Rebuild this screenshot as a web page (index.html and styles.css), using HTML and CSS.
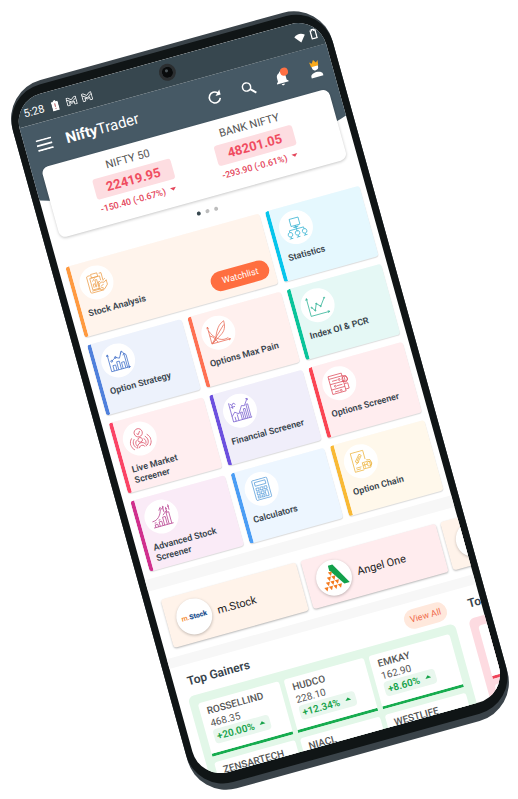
FILE: index.html
```html
<!DOCTYPE html>
<html lang="en">
<head>
<meta charset="utf-8">
<meta name="viewport" content="width=device-width, initial-scale=1">
<title>NiftyTrader</title>
<link rel="stylesheet" href="styles.css">
</head>
<body>
<main class="phone">
<div class="bezel">
<div class="screen">
  <span class="camera"></span>
  <div class="status">
    <span class="time">5:28</span>
    <svg class="s-batt" viewBox="0 0 8 12"><path d="M2.6 0h2.8v1.4H8V12H0V1.4h2.6z" fill="#fff"/><path d="M4 3.5v4M4 8.8v1.3" stroke="#b9666a" stroke-width="1.2"/></svg>
    <svg class="s-mail" viewBox="0 0 12 10"><path d="M.6 9.400V.8h1.800L6 3.600 9.600.8h1.800v8.600H8.600V5.800L6 7.800 3.400 5.800v3.600zM.6 2.600L6 6.200l5.400-3.600" fill="none" stroke="#fff" stroke-width=".9"/></svg>
    <svg class="s-mail" viewBox="0 0 12 10"><path d="M.6 9.400V.8h1.800L6 3.600 9.600.8h1.800v8.600H8.600V5.800L6 7.800 3.400 5.800v3.600zM.6 2.600L6 6.200l5.400-3.600" fill="none" stroke="#fff" stroke-width=".9"/></svg>
    <svg class="s-wifi" viewBox="0 0 12 10"><path d="M0 2.6Q6-2 12 2.6L6 10z" fill="#fff"/></svg>
    <svg class="s-cell" viewBox="0 0 7 11"><path d="M1 2h1.5V.8h2V2H6v8H1z" fill="none" stroke="#fff" stroke-width="1.3"/></svg>
  </div>
  <header class="top">
    <button class="ic" aria-label="Menu"><svg width="16" height="12" viewBox="0 0 16 12"><path d="M0 1h16M0 6h16M0 11h16" stroke="#fff" stroke-width="1.7"/></svg></button>
    <h1 class="brand"><b>Nifty</b>Trader</h1>
    <nav class="tools">
      <button class="ic" aria-label="Refresh"><svg width="15" height="15" viewBox="0 0 15 15"><path d="M12.6 9.3a5.5 5.5 0 1 1-1.2-5.7l1.3 1.3" fill="none" stroke="#fff" stroke-width="1.6"/><path d="M13.8.9v5.3H8.5z" fill="#fff"/></svg></button>
      <button class="ic" aria-label="Search"><svg width="15" height="15" viewBox="0 0 15 15"><circle cx="5.8" cy="5.8" r="4.1" fill="none" stroke="#fff" stroke-width="1.5"/><path d="M8.8 8.8l5 5" stroke="#fff" stroke-width="1.9"/></svg></button>
      <button class="ic bell" aria-label="Notifications"><svg width="14" height="16" viewBox="0 0 14 16"><path d="M1 12.6v-.9l1.5-1.5V6.6c0-2.4 1.4-4.2 3.4-4.7C6 .6 8 .6 8.100 1.900c2 .5 3.400 2.300 3.400 4.700v3.600l1.500 1.500v.9zM5.500 13.500h3c0 2-3 2-3 0z" fill="#fff"/></svg><span class="badge"></span></button>
      <button class="ic" aria-label="Profile"><svg width="14" height="20" viewBox="0 0 14 20"><path d="M4 7.500a3.200 3.200 0 0 0 6 0V6H4z" fill="#fff"/><circle cx="7" cy="8" r="3.200" fill="#fff"/><path d="M1 18v-1.600c0-2.500 4-3.400 6-3.400s6 .9 6 3.400V18z" fill="#fff"/><path d="M3.300 7L2.600 1.800l2.200 2L7 .5l2.200 3.300 2.200-2L10.700 7z" fill="#f9a91b"/></svg></button>
    </nav>
  </header>
  <section class="indices">
    <article class="index">
      <h2>NIFTY 50</h2><strong>22419.95</strong>
      <p>-150.40 (-0.67%) <i class="down"></i></p>
    </article>
    <article class="index">
      <h2>BANK NIFTY</h2><strong>48201.05</strong>
      <p>-293.90 (-0.61%) <i class="down"></i></p>
    </article>
  </section>
  <div class="dots"><i class="on"></i><i></i><i></i></div>

  <section class="grid">
    <article class="tile wide orange">
      <span class="disc"><svg viewBox="0 0 24 24"><path d="M7 3H4.500A1.500 1.500 0 0 0 3 4.500v16A1.500 1.500 0 0 0 4.500 22H18M17 3h2.500"/><path d="M19.500 3v9M6 6h11v5M6 6v13h8M8 2h7v4H8zM5 20h10M8 17v-4h2v4M11 17V9h2v8M14 17v-5h2M8 10l3-3"/><path d="M14 15l3-2 3 1 3-2v5l-4 4h-4l-2-2zM16 17l3-1M18 20l-3-2M20 11l2-1"/></svg></span>
      <a href="#">Stock Analysis</a><button class="watch">Watchlist</button>
    </article>
    <article class="tile cyan">
      <span class="disc"><svg viewBox="0 0 24 24"><path d="M7 2h10v8H7zM12 10v5M10 12h4M4 16v-2h16v2M12 15v2M9 11.500h6"/><circle cx="4" cy="18.500" r="2.500"/><circle cx="12" cy="18.500" r="2.500"/><circle cx="20" cy="18.500" r="2.500"/><path d="M2 23h4M10 23h4M18 23h4M4 21v2M12 21v2M20 21v2"/></svg></span>
      <a href="#">Statistics</a>
    </article>
    <article class="tile blue">
      <span class="disc"><svg viewBox="0 0 24 24"><path d="M2 3v19h21M.8 5L2 3l1.200 2M21 20.800l2 1.200-2 1.200M5 22v-6h3v6M10 22v-9h3v9M15 22v-7h3v7M20 22V6l-1.500 2M20 6l-2-3-2 3M20 6l2 2v14M5 11l5-3 4 2 4-7"/><circle cx="5" cy="11" r="1"/><circle cx="10" cy="8" r="1"/></svg></span>
      <a href="#">Option Strategy</a>
    </article>
    <article class="tile coral">
      <span class="disc"><svg viewBox="0 0 24 24"><path d="M2 3v19h21M1 5l1-2 1 2M21 21l2 1-2 1M2 22L20 5M2 22C7 21 8 15 11 10S16 3 21 1c0 7-2 11-7 14S6 20 2 22M2 7c2 5 4 9 9 12 4 2 6 2 10 1M2 13c4 2 5 5 7 9"/></svg></span>
      <a href="#">Options Max Pain</a>
    </article>
    <article class="tile green">
      <span class="disc"><svg viewBox="0 0 24 24"><path d="M2 2v20h21M.8 4L2 2l1.200 2M21 20.800l2 1.200-2 1.200M5 13l3 4 3-7 4 4 6-8"/><circle cx="5" cy="13" r=".6"/><circle cx="8" cy="17" r=".6"/><circle cx="11" cy="10" r=".6"/><circle cx="15" cy="14" r=".6"/><circle cx="21" cy="6" r=".6"/></svg></span>
      <a href="#">Index OI &amp; PCR</a>
    </article>
    <article class="tile rose">
      <span class="disc"><svg viewBox="0 0 24 24"><circle cx="12" cy="5.500" r="4.500"/><circle cx="12" cy="13.500" r="2.500"/><path d="M10 6l1.500 1.500L14 4M7 22c0-7 10-7 10 0M9 22c0-3 6-3 6 0M6 11c-3 3-3 7 0 10M3.500 9.500c-4 4-4 9 0 13M8 13c-2 2-2 4-1 6M18 11c3 3 3 7 0 10M20.500 9.500c4 4 4 9 0 13M16 13c2 2 2 4 1 6"/></svg></span>
      <a href="#">Live Market Screener</a>
    </article>
    <article class="tile violet">
      <span class="disc"><svg viewBox="0 0 24 24"><path d="M2 1v21h21M2 16l4-4 4 3 5-8 3 1 5-7M21 1h2v2M5 22v-5M8 22v-7M12 22v-8h2v8M16 22V11h2v11M20 22V7h2v15M3 2l2 2 2-2 2 2M3 6h5M5 4v4"/></svg></span>
      <a href="#">Financial Screener</a>
    </article>
    <article class="tile red">
      <span class="disc"><svg viewBox="0 0 24 24"><path d="M2 2h15v20H2zM2 5h15M2 11h15M2 17h15M5 8h6M9 14h6M5 20h5M17 5l4 1 1 4-3 3M17 14h4v6h-4M19 7v4h-4"/><circle cx="13" cy="8" r="1"/><circle cx="7" cy="14" r="1"/><circle cx="19" cy="9" r="3"/><circle cx="12" cy="20" r="1"/></svg></span>
      <a href="#">Options Screener</a>
    </article>
    <article class="tile magenta">
      <span class="disc"><svg viewBox="0 0 24 24"><path d="M1 22h22M3 22v-3h3v3M8 22v-5h3v5M13 22v-9h3v9M18 22V9h3v13M1 15c6 0 10-4 12-11M11 5l2-3 2 3M16 1v7M19 3v6M22 1v6M15 4l2-2M18 5h2M21 3h2M3 17h2M8 15h2M14 11l5-4"/></svg></span>
      <a href="#">Advanced Stock Screener</a>
    </article>
    <article class="tile sky">
      <span class="disc"><svg viewBox="0 0 24 24"><rect x="3.500" y="1" width="17" height="22" rx="1"/><path d="M6 3.500h12v4H6zM6 10h3v3H6zM10.500 10h3v3h-3zM15 10h3v3h-3zM6 14.500h3v3H6zM10.500 14.500h3v3h-3zM15 14.500h3V21h-3zM6 19h3v2H6zM10.500 19h3v2h-3z"/></svg></span>
      <a href="#">Calculators</a>
    </article>
    <article class="tile amber">
      <span class="disc"><svg viewBox="0 0 24 24"><path d="M17 11V1H3v21h10M5 18h6M5 20h5"/><path d="M6 11l6-7 2 2-6 7zM8 11l4-5M6 14l4-2M13 14h6l2 1v6h-8zM13 17h6M18 12l4 1 1 4-2 3M15 15v5"/><circle cx="20" cy="17" r="2.500"/></svg></span>
      <a href="#">Option Chain</a>
    </article>
  </section>

  <section class="brokers">
    <a class="broker peach" href="#"><span class="logo"><span class="mstock"><b>m.</b>Stock</span></span>m.Stock</a>
    <a class="broker blush" href="#"><span class="logo"><svg width="30" height="28" viewBox="0 0 32 30"><path d="M13 1h5l13 23h-6L13 6z" fill="#12a04b"/><g fill="#f47b20"><path d="M11 8h4.600l-2.300 4.500zM8.500 13h4.600l-2.300 4.500zM13.500 13h4.600l-2.300 4.500zM6 18h4.600l-2.300 4.500zM11 18h4.600l-2.300 4.500zM16 18h4.600l-2.300 4.500zM3 23h4.600l-2.300 4.500zM8 23h4.600l-2.300 4.500zM13 23h4.600l-2.300 4.500zM18 23h4.600l-2.300 4.500z"/></g></svg></span>Angel One</a>
    <a class="broker peach" href="#" aria-label="Next broker"><span class="logo"></span></a>
  </section>

  <section class="movers">
    <section class="mover">
      <header class="mhead"><h2>Top Gainers</h2><a class="all" href="#">View All</a></header>
      <div class="panel up">
        <article class="quote"><h3>ROSSELLIND</h3><p>468.35</p><span class="chg">+20.00% <i class="rise"></i></span></article>
        <article class="quote"><h3>HUDCO</h3><p>228.10</p><span class="chg">+12.34% <i class="rise"></i></span></article>
        <article class="quote"><h3>EMKAY</h3><p>162.90</p><span class="chg">+8.60% <i class="rise"></i></span></article>
        <article class="quote"><h3>ZENSARTECH</h3></article>
        <article class="quote"><h3>NIACL</h3></article>
        <article class="quote"><h3>WESTLIFE</h3></article>
      </div>
    </section>
    <section class="mover">
      <header class="mhead"><h2>Top Losers</h2></header>
      <div class="panel loss">
        <article class="quote"></article><article class="quote"></article><article class="quote"></article>
        <article class="quote"></article><article class="quote"></article><article class="quote"></article>
      </div>
    </section>
  </section>
</div>
</div>
</main>
</body>
</html>
```
FILE: styles.css
```css
* { box-sizing: border-box; margin: 0; padding: 0; }
body {
  min-height: 100vh;
  display: flex;
  align-items: center;
  justify-content: center;
  padding: 2px 0 0 2px;
  overflow: hidden;
  background: #fff;
  color: #37434c;
  font-family: Roboto, "Open Sans", sans-serif;
}
a { color: inherit; text-decoration: none; }
button { border: 0; background: none; font: inherit; color: inherit; }
svg { display: block; }

/* device */
.phone {
  flex: none;
  width: 100%;
  max-width: 332px;
  padding: 4px 0 7px;
  border-radius: 40px;
  background: #3a4349;
  transform: rotate(-15.5deg);
}
.bezel { padding: 9px 7px 11px; border-radius: 38px; background: #101516; }
.screen {
  position: relative;
  aspect-ratio: 318 / 704;
  overflow: hidden;
  border-radius: 29px;
  background: #fff;
}
.camera {
  position: absolute;
  z-index: 3;
  top: 5px;
  left: 50%;
  width: 17px;
  height: 17px;
  margin-left: -10px;
  border: 3px solid #2b2e30;
  border-radius: 50%;
  background: radial-gradient(circle at 45% 35%, #4b5357 0 1px, #090b0c 2px);
}

/* status and app bar */
.status {
  position: relative;
  z-index: 2;
  display: flex;
  align-items: center;
  gap: 5px;
  height: 28px;
  padding: 3px 6px 0 8px;
  background: #37474f;
  color: #fff;
}
.time { font-size: 11px; }
.s-batt { width: 7px; height: 11px; margin: 0 3px; }
.s-mail { width: 11px; height: 9px; }
.s-wifi { width: 11px; height: 10px; margin-left: auto; }
.s-cell { width: 7px; height: 11px; }
.top {
  position: relative;
  z-index: 0;
  display: flex;
  align-items: center;
  height: 44px;
  padding: 0 9px 0 12px;
  color: #fff;
}
.top::before {
  content: "";
  position: absolute;
  z-index: -1;
  inset: 0 -40px -50px;
  border-radius: 0 0 50% 50% / 0 0 48px 48px;
  background: #465965;
}
.brand { margin-left: 14px; font-size: 15px; font-weight: 400; }
.tools { display: flex; gap: 19px; margin-left: auto; }
.ic { position: relative; display: grid; place-items: center; min-width: 16px; height: 20px; }
.badge {
  position: absolute;
  top: 0;
  right: 0;
  width: 8px;
  height: 8px;
  border-radius: 50%;
  background: #ff7043;
}

/* indices */
.indices {
  position: relative;
  z-index: 1;
  display: flex;
  height: 73px;
  margin: 0 10px;
  padding: 8px 23px 0;
  border-radius: 7px;
  background: #fff;
  box-shadow: 0 1px 3px rgba(0, 0, 0, .22);
}
.index { flex: 1; text-align: center; }
.index h2 { font-size: 11px; line-height: 14px; font-weight: 400; color: #555; }
.index strong {
  display: block;
  width: 81px;
  margin: 3px auto 0;
  border-radius: 3px;
  background: #fddde1;
  color: #f04c60;
  font-size: 13px;
  line-height: 21px;
}
.index p {
  margin-top: 4px;
  color: #e4455a;
  font-size: 9px;
  line-height: 12px;
  font-weight: 500;
  white-space: nowrap;
}
.down, .rise { display: inline-block; border: 3px solid transparent; margin-left: 3px; }
.down { border-top-color: #e4455a; border-bottom: 0; vertical-align: 2px; }
.rise { border-bottom-color: #17a34a; border-top: 0; vertical-align: 3px; }
.dots { display: flex; justify-content: center; gap: 5px; padding: 11px 0 14px; }
.dots i { width: 4px; height: 4px; border-radius: 50%; background: #bdbdbd; }
.dots .on { background: #37474f; }

/* feature tiles */
.grid {
  display: grid;
  grid-template-columns: repeat(3, 1fr);
  gap: 8px 6px;
  padding: 0 6px 7px 7px;
}
.tile {
  position: relative;
  height: 73px;
  padding: 6px 8px 0 5px;
  border-left: 4px solid var(--c);
  border-radius: 3px;
  background: var(--bg);
  box-shadow: 0 1px 1px rgba(0, 0, 0, .14);
}
.wide { grid-column: span 2; }
.tile a { display: block; margin-top: 6px; padding-left: 1px; font-size: 9px; line-height: 11px; font-weight: 600; }
.disc {
  display: grid;
  place-items: center;
  width: 34px;
  height: 34px;
  border-radius: 50%;
  background: #fff;
}
.disc svg { width: 22px; height: 22px; fill: none; stroke: var(--i, var(--c)); stroke-width: .8; }
.watch {
  position: absolute;
  right: 5px;
  bottom: 8px;
  width: 60px;
  height: 20px;
  border-radius: 10px;
  background: #ff6e40;
  color: #fff;
  font-size: 9px;
}
.orange { --c: #ff9a40; --i: #eea04f; --bg: #fff4ec; }
.cyan { --c: #06c5ec; --i: #37b3d2; --bg: #e5f8fe; }
.blue { --c: #4f80dc; --i: #4372c9; --bg: #edf2fc; }
.coral { --c: #ff7052; --i: #ea705d; --bg: #fff0ee; }
.green { --c: #09c49a; --i: #2fb396; --bg: #e5f8f5; }
.rose { --c: #fb4465; --i: #dc5068; --bg: #ffeef0; }
.violet { --c: #6c50df; --i: #7b62cf; --bg: #f0eefa; }
.red { --c: #fb4553; --i: #df5361; --bg: #ffedef; }
.magenta { --c: #d02f8e; --i: #b84391; --bg: #faebf7; }
.sky { --c: #4a9df5; --i: #5b9fdb; --bg: #edf6ff; }
.amber { --c: #f9b934; --i: #eeb745; --bg: #fff8eb; }

/* brokers */
.brokers {
  display: flex;
  gap: 5px;
  padding: 11px 10px 9px;
  border-top: 12px solid #f7f7f7;
  border-bottom: 10px solid #f7f7f7;
}
.broker {
  flex: 0 0 140px;
  display: flex;
  align-items: center;
  gap: 6px;
  height: 50px;
  padding-left: 10px;
  border-radius: 3px;
  color: #222;
  font-size: 11px;
  box-shadow: 0 1px 2px rgba(0, 0, 0, .28);
}
.peach { background: #fff3ea; }
.blush { background: #ffecee; }
.logo {
  display: grid;
  place-items: center;
  width: 36px;
  height: 36px;
  border-radius: 50%;
  background: #fff;
  box-shadow: 0 1px 3px rgba(0, 0, 0, .25);
}
.mstock { font-size: 7px; line-height: 8px; font-weight: 900; color: #24518f; }
.mstock b { font-weight: 500; color: #f58220; }

/* movers */
.movers { display: flex; gap: 14px; padding: 7px 10px 0; }
.mover { flex: 0 0 277px; }
.mhead { display: flex; align-items: center; justify-content: space-between; height: 20px; padding: 0 4px; }
.mhead h2 { font-size: 12px; font-weight: 600; }
.all {
  width: 44px;
  border-radius: 10px;
  background: #ffe8dc;
  color: #f0694a;
  font-size: 9px;
  line-height: 20px;
  text-align: center;
}
.panel {
  display: grid;
  grid-template-columns: repeat(3, 1fr);
  gap: 6px 5px;
  margin-top: 5px;
  padding: 9px 8px;
  border-radius: 6px;
}
.up { background: #e2f7e8; --line: #17ac4f; }
.loss { background: #fddbe1; --line: #ef4459; }
.quote {
  height: 55px;
  padding: 3px 0 0 7px;
  border-bottom: 3px solid var(--line);
  border-radius: 3px 3px 0 0;
  background: #fff;
  color: #555;
  font-size: 10px;
  line-height: 13px;
}
.quote h3 { font-size: 10px; font-weight: 500; }
.chg {
  display: inline-block;
  padding: 0 5px 0 3px;
  border-radius: 4px;
  background: #e9f7ee;
  color: #17a34a;
  font-size: 10px;
  line-height: 15px;
  font-weight: 600;
  white-space: nowrap;
}
```
